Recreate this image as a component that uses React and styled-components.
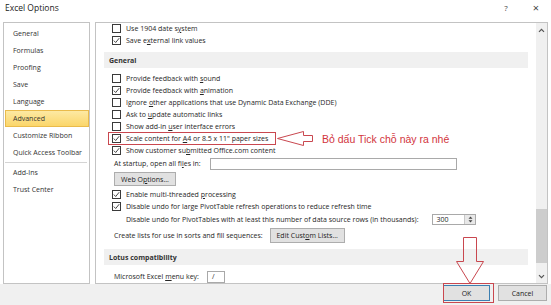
import React from "react";
import styled, { createGlobalStyle } from "styled-components";

const GlobalStyle = createGlobalStyle`
  html, body {
    margin: 0;
    padding: 0;
    background: #ffffff;
  }
  body {
    font-family: "Open Sans", "Noto Sans", sans-serif;
    font-size: 7px;
    color: #262626;
  }
`;

const Dialog = styled.div`
  position: relative;
  width: 551px;
  height: 305px;
  display: flex;
  flex-direction: column;
  background: #ffffff;
  overflow: hidden;
`;

const TitleBar = styled.div`
  height: 22px;
  box-sizing: border-box;
  display: flex;
  align-items: flex-start;
  padding: 2px 0 0 5px;
`;

const Title = styled.div`
  flex: 1;
  font-size: 8.5px;
  line-height: 12px;
  color: #222;
`;

const TitleButton = styled.div`
  width: 30px;
  text-align: center;
  font-size: ${({ $big }) => ($big ? "11px" : "8px")};
  line-height: 12px;
  color: #444;
`;

const Body = styled.div`
  height: 262px;
  display: flex;
  gap: 5px;
  padding-left: 3px;
`;

const NavPanel = styled.div`
  width: 87px;
  box-sizing: border-box;
  border: 1px solid #c3c3c3;
  padding: 2px 0 0 1px;
  display: flex;
  flex-direction: column;
`;

const NavItem = styled.div`
  height: 17px;
  line-height: 17px;
  padding-left: 8px;
  box-sizing: border-box;
  color: #333;
  white-space: nowrap;
  ${({ $active }) =>
    $active &&
    `
    background: linear-gradient(#fde9a3, #fbd66a);
    border: 1px solid #eabb4b;
    line-height: 15px;
    padding-left: 7px;
  `}
`;

const NavSeparator = styled.div`
  height: 1px;
  background: #d4d4d4;
  margin: 1px 2px 1px 0;
`;

const OptionsPanel = styled.div`
  width: 453px;
  box-sizing: border-box;
  border: 1px solid #c3c3c3;
  display: flex;
`;

const Content = styled.div`
  flex: 1;
  padding: 0 8px;
  overflow: hidden;
  display: flex;
  flex-direction: column;
  margin-top: -1px;
`;

const Row = styled.div`
  height: ${({ $h }) => $h || 12}px;
  margin-top: ${({ $mt }) => $mt || 0}px;
  padding-left: ${({ $indent }) => $indent || 8}px;
  display: flex;
  align-items: center;
  white-space: nowrap;
  flex: none;
`;

const Section = styled.div`
  height: 16px;
  margin-top: ${({ $mt }) => $mt || 0}px;
  background: #f0f0f0;
  padding-left: 5px;
  display: flex;
  align-items: center;
  font-weight: 700;
  color: #333;
  flex: none;
`;

const Box = styled.span`
  width: 9px;
  height: 9px;
  box-sizing: border-box;
  border: 1px solid #3a3a3a;
  background: #fff;
  margin-right: 5px;
  display: flex;
  align-items: center;
  justify-content: center;
  flex: none;
`;

const Key = styled.span`
  text-decoration: underline;
`;

const TextField = styled.div`
  width: ${({ $w }) => $w}px;
  height: 12px;
  margin-left: ${({ $ml }) => $ml || 0}px;
  box-sizing: border-box;
  border: 1px solid #a9a9a9;
  background: #fff;
  padding-left: 4px;
  line-height: 10px;
`;

const Button = styled.div`
  width: ${({ $w }) => $w}px;
  height: ${({ $h }) => $h || 14}px;
  margin-left: ${({ $ml }) => $ml || 0}px;
  box-sizing: border-box;
  border: 1px solid ${({ $primary }) => ($primary ? "#3c7fb1" : "#adadad")};
  background: #e1e1e1;
  display: flex;
  align-items: center;
  justify-content: center;
  color: #222;
  flex: none;
`;

const Spin = styled.div`
  display: flex;
  margin-left: 14px;
  height: 11px;
  border: 1px solid #a9a9a9;
  box-sizing: border-box;
`;

const SpinValue = styled.div`
  width: 28px;
  padding-left: 3px;
  line-height: 9px;
  background: #fff;
`;

const SpinArrows = styled.div`
  width: 10px;
  background: #e8e8e8;
  border-left: 1px solid #c8c8c8;
  display: flex;
  align-items: center;
  justify-content: center;
`;

const ScrollBar = styled.div`
  width: 11px;
  background: #f0f0f0;
  display: flex;
  flex-direction: column;
`;

const ScrollArrow = styled.div`
  height: 14px;
  display: flex;
  align-items: center;
  justify-content: center;
`;

const ScrollTrack = styled.div`
  flex: 1;
  display: flex;
  flex-direction: column;
  justify-content: flex-end;
  padding-bottom: 6px;
`;

const Thumb = styled.div`
  height: 54px;
  background: #cdcdcd;
`;

const Footer = styled.div`
  flex: 1;
  background: #f0f0f0;
  display: flex;
  justify-content: flex-end;
  gap: 8px;
  padding: 1px 4px 0 0;
`;

const Highlight = styled.div`
  position: absolute;
  border: 1px solid #c9474f;
`;

const Note = styled.div`
  position: absolute;
  left: 322px;
  top: 131px;
  font-family: "Liberation Sans", Arial, sans-serif;
  font-size: 10.5px;
  line-height: 16px;
  color: #d2343c;
  white-space: nowrap;
`;

const Overlay = styled.svg`
  position: absolute;
  left: 0;
  top: 0;
  pointer-events: none;
`;

const Check = ({ checked }) => (
  <Box>
    {checked && (
      <svg width="7" height="7" viewBox="0 0 7 7">
        <path d="M0.8 3.6 L2.7 5.5 L6.2 1.2" fill="none" stroke="#333" strokeWidth="0.9" />
      </svg>
    )}
  </Box>
);

const CheckRow = ({ checked, children, mt }) => (
  <Row $mt={mt}>
    <Check checked={checked} />
    <span>{children}</span>
  </Row>
);

const Chevron = ({ down }) => (
  <svg width="7" height="5" viewBox="0 0 7 5">
    <path
      d={down ? "M1 1.2 L3.5 3.7 L6 1.2" : "M1 3.8 L3.5 1.3 L6 3.8"}
      fill="none"
      stroke="#555"
      strokeWidth="1.2"
    />
  </svg>
);

const navItems = [
  "General",
  "Formulas",
  "Proofing",
  "Save",
  "Language",
  "Advanced",
  "Customize Ribbon",
  "Quick Access Toolbar",
];

const generalRows = [
  { checked: false, label: <>Provide feedback with <Key>s</Key>ound</> },
  { checked: true, label: <>Provide feedback with <Key>a</Key>nimation</> },
  { checked: false, label: <>Ignore <Key>o</Key>ther applications that use Dynamic Data Exchange (DDE)</> },
  { checked: false, label: <>Ask to <Key>u</Key>pdate automatic links</> },
  { checked: false, label: <>Show add-in <Key>u</Key>ser interface errors</> },
  { checked: true, label: <>Scale content for <Key>A</Key>4 or 8.5 x 11" paper sizes</> },
  { checked: true, label: <>Show customer su<Key>b</Key>mitted Office.com content</> },
];

const App = () => {
  return (
    <Dialog>
      <GlobalStyle />
      <TitleBar>
        <Title>Excel Options</Title>
        <TitleButton>?</TitleButton>
        <TitleButton $big>×</TitleButton>
      </TitleBar>

      <Body>
        <NavPanel>
          {navItems.map((item) => (
            <NavItem key={item} $active={item === "Advanced"}>
              {item}
            </NavItem>
          ))}
          <NavSeparator />
          <NavItem>Add-Ins</NavItem>
          <NavItem>Trust Center</NavItem>
        </NavPanel>

        <OptionsPanel>
          <Content>
            <CheckRow checked={false}>
              Use 1904 date s<Key>y</Key>stem
            </CheckRow>
            <CheckRow checked>
              Save e<Key>x</Key>ternal link values
            </CheckRow>

            <Section $mt={6}>General</Section>
            <Row $h={4} />
            {generalRows.map((r, i) => (
              <CheckRow key={i} checked={r.checked}>
                {r.label}
              </CheckRow>
            ))}
            <Row $h={13} $mt={1} $indent={10}>
              <span>
                At startup, open all fi<Key>l</Key>es in:
              </span>
              <TextField $w={247} $ml={9} />
            </Row>
            <Row $h={14} $mt={2} $indent={10}>
              <Button $w={62} $h={14}>
                Web O<Key>p</Key>tions...
              </Button>
            </Row>
            <CheckRow checked mt={2}>
              Enable multi-threaded <Key>p</Key>rocessing
            </CheckRow>
            <CheckRow checked>
              Disable undo for large PivotTable refresh operations to reduce refresh time
            </CheckRow>
            <Row $h={12} $mt={1} $indent={22}>
              <span>
                Disable undo for PivotTables with at least this number of data source rows (in thousands):
              </span>
              <Spin>
                <SpinValue>300</SpinValue>
                <SpinArrows>
                  <svg width="5" height="7" viewBox="0 0 5 7">
                    <path d="M2.5 0.5 L4.5 2.8 L0.5 2.8 Z M2.5 6.5 L4.5 4.2 L0.5 4.2 Z" fill="#444" />
                  </svg>
                </SpinArrows>
              </Spin>
            </Row>
            <Row $h={16} $mt={2} $indent={10}>
              <span>Create lists for use in sorts and fill sequences:</span>
              <Button $w={75} $h={15} $ml={7}>
                Edit Cust<Key>o</Key>m Lists...
              </Button>
            </Row>

            <Section $mt={6}>Lotus compatibility</Section>
            <Row $h={13} $mt={5} $indent={10}>
              <span>
                Microsoft Excel <Key>m</Key>enu key:
              </span>
              <TextField $w={18} $ml={8} $h={13}>
                /
              </TextField>
            </Row>
          </Content>

          <ScrollBar>
            <ScrollArrow>
              <Chevron />
            </ScrollArrow>
            <ScrollTrack>
              <Thumb />
            </ScrollTrack>
            <ScrollArrow>
              <Chevron down />
            </ScrollArrow>
          </ScrollBar>
        </OptionsPanel>
      </Body>

      <Footer>
        <Button $w={47} $h={16} $primary>
          OK
        </Button>
        <Button $w={49} $h={16}>
          Cancel
        </Button>
      </Footer>

      <Highlight style={{ left: 108, top: 132, width: 166, height: 11 }} />
      <Highlight style={{ left: 443, top: 283, width: 49, height: 18 }} />
      <Note>Bỏ dấu Tick chỗ này ra nhé</Note>
      <Overlay width="551" height="305" viewBox="0 0 551 305">
        <path
          d="M277.5 138.5 L303.5 131.5 L303.5 135.5 L312.5 135.5 L312.5 141.5 L303.5 141.5 L303.5 145.5 Z"
          fill="#ffffff"
          stroke="#c9474f"
          strokeWidth="1"
        />
        <path
          d="M463.5 237.5 L476.5 237.5 L476.5 261.5 L483.5 261.5 L470 283.5 L456.5 261.5 L463.5 261.5 Z"
          fill="none"
          stroke="#c9474f"
          strokeWidth="1"
        />
      </Overlay>
    </Dialog>
  );
};

export default App;
